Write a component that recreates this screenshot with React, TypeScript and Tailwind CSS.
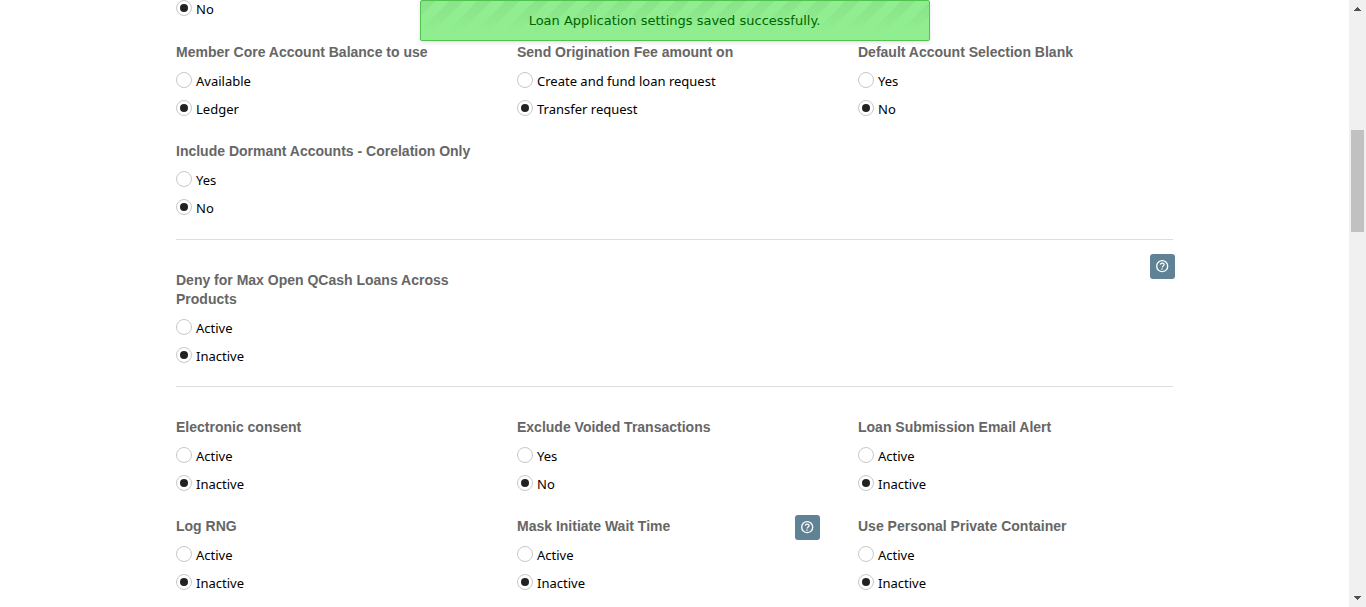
import React, { useId } from "react";

type FieldProps = {
  title?: string;
  options: string[];
  selected: string;
  help?: boolean;
};

function HelpButton() {
  return (
    <button
      type="button"
      aria-label="Help"
      className="flex size-[25px] items-center justify-center rounded-[3px] bg-[#5f8295] text-white"
    >
      <svg viewBox="0 0 13 13" className="size-[13px]" fill="none" stroke="currentColor">
        <circle cx="6.2" cy="6.2" r="5.5" strokeWidth="1.3" />
        <path d="M4.4 4.6c.1-1 .9-1.5 1.9-1.5s1.8.5 1.8 1.4c0 1.3-1.6 1.4-1.9 3M6 8.5v1.2" strokeWidth="1.3" />
      </svg>
    </button>
  );
}

function Field({ title, options, selected, help }: FieldProps) {
  const name = useId();
  return (
    <fieldset className="min-w-0">
      {title && (
        <legend className="mb-1 w-full font-['Liberation_Sans',Arial,sans-serif] text-sm leading-[19px] font-bold text-[#666]">
          <span className="relative block">
            {title}
            {help && (
              <span className="absolute -top-0.5 right-3">
                <HelpButton />
              </span>
            )}
          </span>
        </legend>
      )}
      {options.map((option) => (
        <label key={option} className="flex h-7 items-center gap-1 text-[13px] text-black">
          <input
            type="radio"
            name={name}
            defaultChecked={option === selected}
            className="flex size-4 shrink-0 appearance-none items-center justify-center rounded-full border border-[#c8c8c8] bg-white before:size-2 before:rounded-full checked:before:bg-[#222]"
          />
          <span className="pt-1">{option}</span>
        </label>
      ))}
    </fieldset>
  );
}

const activeOptions = ["Active", "Inactive"];
const yesNo = ["Yes", "No"];
const grid = "grid grid-cols-3 gap-x-[26px] gap-y-5";

export default function App() {
  return (
    <div className="flex min-h-screen overflow-hidden bg-white font-['Noto_Sans',sans-serif]">
      <div className="relative min-w-0 flex-1">
        <div
          role="status"
          className="absolute inset-x-0 top-0 mx-auto flex h-[41px] w-[510px] items-center justify-center overflow-hidden rounded-xs border border-[#50c24e] bg-[#90ee90] bg-[linear-gradient(to_bottom,transparent,#90ee90_85%),repeating-linear-gradient(135deg,#8ae38a_0_10px,#90ee90_10px_20px)] font-['DejaVu_Sans',sans-serif] text-[13px] text-[#006400] shadow-[0_2px_4px_rgba(0,0,0,0.1)]"
        >
          Loan Application settings saved successfully.
        </div>
        <main className="mx-auto -mt-1.5 w-full max-w-[997px]">
          <div className={grid}>
            <Field options={["No"]} selected="No" />
          </div>
          <section className={`${grid} mt-[21px] border-b border-[#ddd] pb-[18px]`}>
            <Field title="Member Core Account Balance to use" options={["Available", "Ledger"]} selected="Ledger" />
            <Field
              title="Send Origination Fee amount on"
              options={["Create and fund loan request", "Transfer request"]}
              selected="Transfer request"
            />
            <Field title="Default Account Selection Blank" options={yesNo} selected="No" />
            <Field title="Include Dormant Accounts - Corelation Only" options={yesNo} selected="No" />
          </section>
          <section className={`${grid} relative border-b border-[#ddd] pt-[31px] pb-[17px]`}>
            <Field title="Deny for Max Open QCash Loans Across Products" options={activeOptions} selected="Inactive" />
            <div className="absolute top-3.5 -right-0.5">
              <HelpButton />
            </div>
          </section>
          <section className={`${grid} pt-[31px]`}>
            <Field title="Electronic consent" options={activeOptions} selected="Inactive" />
            <Field title="Exclude Voided Transactions" options={yesNo} selected="No" />
            <Field title="Loan Submission Email Alert" options={activeOptions} selected="Inactive" />
            <Field title="Log RNG" options={activeOptions} selected="Inactive" />
            <Field title="Mask Initiate Wait Time" options={activeOptions} selected="Inactive" help />
            <Field title="Use Personal Private Container" options={activeOptions} selected="Inactive" />
          </section>
        </main>
      </div>
      <div aria-hidden="true" className="flex w-[17px] shrink-0 flex-col items-center justify-between bg-[#f0f0f0] py-[7px]">
        <div className="flex flex-col items-center gap-[119px]">
          <svg viewBox="0 0 7 4" className="h-1 w-[7px]" fill="#505050" shapeRendering="crispEdges">
            <path d="M3 0h1v1h1v1h1v1h1v1H0V3h1V2h1V1h1z" />
          </svg>
          <div className="h-[102px] w-[13px] bg-[#c1c1c1]" />
        </div>
        <svg viewBox="0 0 7 4" className="h-1 w-[7px]" fill="#505050" shapeRendering="crispEdges">
          <path d="M3 4h1V3h1V2h1V1h1V0H0v1h1v1h1v1h1z" />
        </svg>
      </div>
    </div>
  );
}
